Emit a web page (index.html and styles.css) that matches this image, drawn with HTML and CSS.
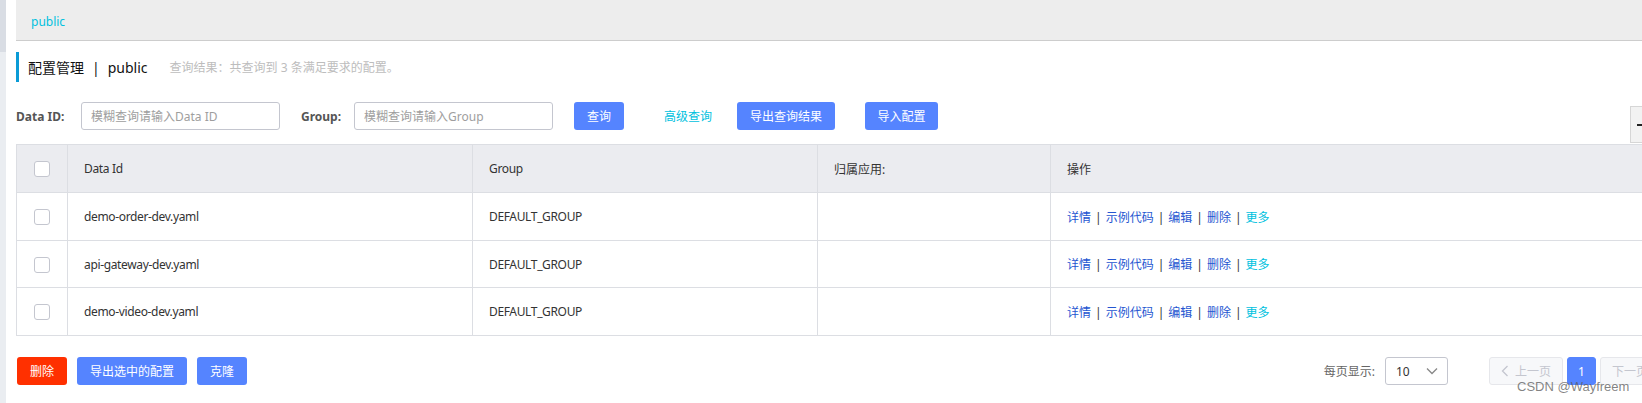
FILE: index.html
```html
<!DOCTYPE html>
<html lang="zh">
<head>
<meta charset="utf-8">
<title>配置管理</title>
<link rel="stylesheet" href="styles.css">
</head>
<body>
<div class="page">
  <aside class="side"><div class="side-top"></div><div class="side-rest"></div></aside>
  <main class="main">
    <div class="topbar"><span class="ns">public</span></div>
    <div class="title-row">
      <span class="title">配置管理<span class="title-sep">|</span>public</span>
      <span class="result">查询结果：共查询到 3 条满足要求的配置。</span>
    </div>
    <div class="search">
      <label class="lbl lbl-id">Data ID:</label>
      <input class="inp" type="text" placeholder="模糊查询请输入Data ID">
      <label class="lbl lbl-group">Group:</label>
      <input class="inp" type="text" placeholder="模糊查询请输入Group">
      <button class="btn btn-query">查询</button>
      <a class="adv">高级查询</a>
      <button class="btn btn-export">导出查询结果</button>
      <button class="btn btn-import">导入配置</button>
    </div>
    <div class="float-btn"><span class="dash"></span></div>
    <table class="grid">
      <colgroup>
        <col class="c-check"><col class="c-id"><col class="c-group"><col class="c-app"><col class="c-op">
      </colgroup>
      <thead>
        <tr>
          <th class="cell-check"><span class="chk"></span></th>
          <th class="latin">Data Id</th>
          <th class="latin">Group</th>
          <th>归属应用:</th>
          <th>操作</th>
        </tr>
      </thead>
      <tbody>
        <tr>
          <td class="cell-check"><span class="chk"></span></td>
          <td class="latin">demo-order-dev.yaml</td>
          <td class="latin">DEFAULT_GROUP</td>
          <td></td>
          <td><a class="op">详情</a><span class="sep">|</span><a class="op">示例代码</a><span class="sep">|</span><a class="op">编辑</a><span class="sep">|</span><a class="op">删除</a><span class="sep">|</span><a class="op more">更多</a></td>
        </tr>
        <tr>
          <td class="cell-check"><span class="chk"></span></td>
          <td class="latin">api-gateway-dev.yaml</td>
          <td class="latin">DEFAULT_GROUP</td>
          <td></td>
          <td><a class="op">详情</a><span class="sep">|</span><a class="op">示例代码</a><span class="sep">|</span><a class="op">编辑</a><span class="sep">|</span><a class="op">删除</a><span class="sep">|</span><a class="op more">更多</a></td>
        </tr>
        <tr>
          <td class="cell-check"><span class="chk"></span></td>
          <td class="latin">demo-video-dev.yaml</td>
          <td class="latin">DEFAULT_GROUP</td>
          <td></td>
          <td><a class="op">详情</a><span class="sep">|</span><a class="op">示例代码</a><span class="sep">|</span><a class="op">编辑</a><span class="sep">|</span><a class="op">删除</a><span class="sep">|</span><a class="op more">更多</a></td>
        </tr>
      </tbody>
    </table>
    <div class="footer">
      <div class="batch">
        <button class="btn btn-danger btn-del">删除</button>
        <button class="btn btn-export-sel">导出选中的配置</button>
        <button class="btn btn-clone">克隆</button>
      </div>
      <div class="pager">
        <span class="size-lbl">每页显示:</span>
        <div class="select"><span>10</span>
          <svg class="chev" width="12" height="8" viewBox="0 0 12 8"><path d="M1 1.5 L6 6.5 L11 1.5" fill="none" stroke="#888" stroke-width="1.3"/></svg>
        </div>
        <button class="pbtn prev" disabled>
          <svg width="8" height="12" viewBox="0 0 8 12"><path d="M6.5 1 L1.5 6 L6.5 11" fill="none" stroke="#c4c6cf" stroke-width="1.3"/></svg>
          <span>上一页</span>
        </button>
        <button class="pbtn cur">1</button>
        <button class="pbtn next" disabled><span>下一页</span>
          <svg width="8" height="12" viewBox="0 0 8 12"><path d="M1.5 1 L6.5 6 L1.5 11" fill="none" stroke="#c4c6cf" stroke-width="1.3"/></svg>
        </button>
      </div>
    </div>
  </main>
</div>
<div class="watermark">CSDN @Wayfreem</div>
</body>
</html>
```

FILE: styles.css
```css
* { box-sizing: border-box; }

html, body {
  margin: 0;
  padding: 0;
  width: 1642px;
  height: 403px;
  overflow: hidden;
  background: #fff;
}

body {
  position: relative;
  font-family: "Noto Sans", "Noto Sans CJK SC", sans-serif;
  font-size: 12px;
  color: #333;
}

.page {
  display: flex;
  height: 403px;
}

.side {
  width: 6px;
  flex: none;
  display: flex;
  flex-direction: column;
}
.side-top { height: 52px; background: #d9dde4; }
.side-rest { flex: 1; background: #eaedf1; }

.main {
  position: relative;
  flex: none;
  width: 1658px;
  margin-left: 10px;
}

.topbar {
  height: 41px;
  background: #ededed;
  border-bottom: 1px solid #cdcdcd;
  padding-left: 15px;
  line-height: 43px;
}
.ns { color: #00c1de; font-size: 12px; }

.title-row {
  margin-top: 11px;
  height: 30px;
  border-left: 3px solid #0a9bd6;
  padding-left: 9px;
  display: flex;
  align-items: center;
}
.title { font-size: 14px; color: #111; }
.title-sep { margin: 0 8px; }
.result { margin-left: 22px; color: #bdbdbd; font-size: 12px; }

.search {
  margin-top: 20px;
  height: 28px;
  display: flex;
  align-items: center;
}
.lbl { font-weight: bold; color: #555; font-size: 12px; }
.lbl-id { width: 65px; }
.lbl-group { width: 53px; margin-left: 21px; }
.inp {
  width: 199px;
  height: 28px;
  border: 1px solid #c4c6cf;
  border-radius: 3px;
  padding: 0 9px;
  font: inherit;
  font-size: 12px;
  color: #333;
  outline: none;
}
.inp::placeholder { color: #9e9e9e; }

.btn {
  height: 28px;
  border: none;
  border-radius: 3px;
  background: #5584ff;
  color: #fff;
  font: inherit;
  font-size: 12px;
  padding: 0;
  text-align: center;
}
.btn-query { width: 50px; margin-left: 21px; }
.adv { margin-left: 40px; color: #00c1de; width: 48px; }
.btn-export { width: 98px; margin-left: 25px; }
.btn-import { width: 73px; margin-left: 30px; }

.float-btn {
  position: absolute;
  top: 106px;
  left: 1614px;
  width: 30px;
  height: 37px;
  background: #f2f2f2;
  border: 1px solid #d6d6d6;
  display: flex;
  align-items: center;
  padding-left: 6px;
}
.dash { width: 9px; height: 2px; background: #222; }

.grid {
  margin-top: 14px;
  width: 1658px;
  table-layout: fixed;
  border-collapse: collapse;
}
.c-check { width: 51px; }
.c-id { width: 405px; }
.c-group { width: 345px; }
.c-app { width: 233px; }
.grid th, .grid td {
  border: 1px solid #dcdee3;
  height: 47px;
  padding: 0 0 0 16px;
  text-align: left;
  font-weight: normal;
  font-size: 12px;
  color: #333;
  white-space: nowrap;
}
.grid .latin { letter-spacing: -0.35px; }
.grid thead th { background: #ebecf0; height: 48px; }
.grid td.cell-check, .grid th.cell-check { padding: 0; text-align: center; }
.grid tbody tr:first-child td { height: 48px; }
.grid tbody tr:last-child td { height: 48px; }
.chk {
  display: inline-block;
  width: 16px;
  height: 16px;
  border: 1px solid #c4c6cf;
  border-radius: 3px;
  background: #fff;
  vertical-align: middle;
}
.op { color: #2556d1; }
.op.more { color: #00c1de; }
.sep { margin: 0 4px; color: #333; }

.footer {
  margin-top: 21px;
  display: flex;
  justify-content: space-between;
  align-items: center;
  height: 28px;
}
.batch { display: flex; gap: 10px; }
.btn-danger { background: #ff3000; }
.btn-del { width: 50px; margin-left: 1px; }
.btn-export-sel { width: 110px; }
.btn-clone { width: 50px; }

.pager { display: flex; align-items: center; }
.size-lbl { color: #666; font-size: 12px; }
.select {
  margin-left: 10px;
  width: 63px;
  height: 28px;
  border: 1px solid #c4c6cf;
  border-radius: 3px;
  display: flex;
  align-items: center;
  justify-content: space-between;
  padding: 0 9px 0 10px;
  color: #333;
}
.pbtn {
  height: 28px;
  border: 1px solid #e6e7eb;
  border-radius: 3px;
  background: #f7f8fa;
  color: #c4c6cf;
  font: inherit;
  font-size: 12px;
  display: flex;
  align-items: center;
  justify-content: center;
  gap: 6px;
  padding: 0;
}
.prev { width: 74px; margin-left: 41px; }
.cur { width: 29px; margin-left: 4px; background: #5584ff; border-color: #5584ff; color: #fff; }
.next { width: 74px; margin-left: 4px; }

.watermark {
  position: absolute;
  left: 1517px;
  top: 379px;
  font-family: "Liberation Sans", Arial, sans-serif;
  font-size: 13px;
  color: rgba(90, 90, 90, 0.75);
  white-space: nowrap;
}
```
